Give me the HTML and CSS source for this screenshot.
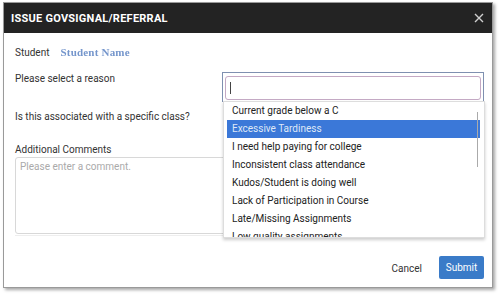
FILE: index.html
```html
<!DOCTYPE html>
<html>
<head>
<meta charset="utf-8">
<link rel="stylesheet" href="styles.css">
</head>
<body>
<div class="modal">
  <div class="header">
    <span class="title">ISSUE GOVSIGNAL/REFERRAL</span>
    <span class="close">
      <svg width="10" height="10" viewBox="0 0 10 10"><path d="M1 1 L9 9 M9 1 L1 9" stroke="#cfcfcf" stroke-width="1.4"/></svg>
    </span>
  </div>
  <div class="content">
    <div class="student-row">
      <span class="label">Student</span>
      <span class="student-name">Student Name</span>
    </div>
    <div class="reason-row">
      <span class="label reason-label">Please select a reason</span>
      <div class="select">
        <div class="search"><span class="caret"></span></div>
        <div class="dropdown">
          <ul class="options">
            <li>Current grade below a C</li>
            <li class="active">Excessive Tardiness</li>
            <li>I need help paying for college</li>
            <li>Inconsistent class attendance</li>
            <li>Kudos/Student is doing well</li>
            <li>Lack of Participation in Course</li>
            <li>Late/Missing Assignments</li>
            <li>Low quality assignments</li>
          </ul>
          <div class="scrollbar"></div>
        </div>
      </div>
    </div>
    <div class="class-row">
      <span class="label">Is this associated with a specific class?</span>
    </div>
    <div class="comments">
      <span class="label">Additional Comments</span>
      <div class="textarea">Please enter a comment.</div>
    </div>
  </div>
  <div class="footer">
    <span class="cancel">Cancel</span>
    <span class="submit">Submit</span>
  </div>
</div>
</body>
</html>
```
FILE: styles.css
```css
* { box-sizing: border-box; }
body {
  margin: 0;
  background: #ffffff;
  font-family: Roboto, "Liberation Sans", sans-serif;
  width: 500px;
  height: 297px;
  overflow: hidden;
}
.modal {
  margin: 2px 0 0 3px;
  width: 490px;
  height: 286px;
  border: 1px solid #9a9a9a;
  background: #fff;
  box-shadow: 2px 2px 3px rgba(0,0,0,0.35);
  display: flex;
  flex-direction: column;
}
.header {
  height: 30px;
  background: #232323;
  display: flex;
  align-items: center;
  justify-content: space-between;
  padding: 0 8px 0 7px;
  flex: none;
}
.title {
  color: #fff;
  font-weight: bold;
  font-size: 11px;
  letter-spacing: 0.25px;
}
.close { display: flex; align-items: center; }
.content {
  padding: 0 8px 0 11px;
  flex: 1;
}
.label {
  font-size: 10px;
  color: #333;
}
.student-row {
  display: flex;
  align-items: center;
  gap: 11px;
  margin-top: 13px;
  height: 12px;
}
.student-name {
  font-family: "Liberation Serif", serif;
  font-weight: bold;
  font-size: 11px;
  letter-spacing: 0.2px;
  color: #7596cc;
  filter: blur(0.3px);
}
.reason-row {
  display: flex;
  justify-content: space-between;
  margin-top: 14px;
  height: 30px;
}
.reason-label { margin-top: 1px; }
.select {
  position: relative;
  width: 262px;
  height: 30px;
  border: 1px solid #7f90b0;
  border-bottom: none;
  padding: 3px 2px 0 2px;
}
.search {
  height: 24px;
  border: 1px solid #c4a9c4;
  border-radius: 3px;
  display: flex;
  align-items: center;
  padding-left: 4px;
}
.caret {
  width: 1px;
  height: 12px;
  background: #444;
}
.dropdown {
  position: absolute;
  left: 0;
  top: 28px;
  width: 262px;
  height: 137px;
  background: #fff;
  border: 1px solid #ddd;
  box-shadow: 0 2px 3px rgba(0,0,0,0.2);
  overflow: hidden;
  padding: 0 4px 0 3px;
}
.options {
  list-style: none;
  margin: 0;
  padding: 0;
}
.options li {
  height: 18px;
  line-height: 18px;
  font-size: 10px;
  color: #222;
  padding-left: 5px;
  white-space: nowrap;
}
.options li.active {
  background: #3b78d8;
  color: #dfe8f7;
}
.scrollbar {
  position: absolute;
  right: 6px;
  top: 10px;
  width: 1px;
  height: 55px;
  background: #aaa;
}
.class-row {
  margin-top: 3px;
  height: 12px;
}
.comments {
  margin-top: 27px;
  display: flex;
  flex-direction: column;
}
.comments .label { height: 12px; }
.textarea {
  margin-top: 1px;
  width: 468px;
  height: 77px;
  border: 1px solid #d8d8d8;
  border-radius: 3px;
  font-size: 10px;
  color: #aaa;
  padding: 3px 4px;
}
.footer {
  margin: 0 8px 8px 11px;
  border-top: 1px solid #eee;
  height: 44px;
  display: flex;
  align-items: flex-end;
  justify-content: flex-end;
  gap: 17px;
  flex: none;
}
.cancel {
  font-size: 10px;
  color: #333;
  margin-bottom: 5px;
}
.submit {
  width: 45px;
  height: 23px;
  background: #3a7bc8;
  color: #fff;
  font-size: 10px;
  border-radius: 2px;
  display: flex;
  align-items: center;
  justify-content: center;
}
```
